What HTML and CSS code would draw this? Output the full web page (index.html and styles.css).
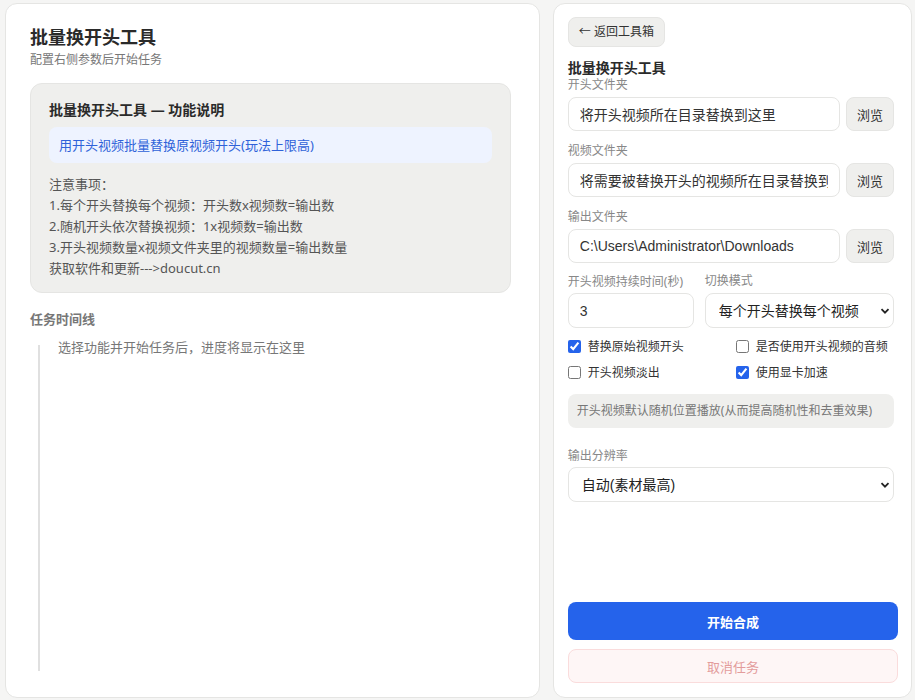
FILE: index.html
```html
<!DOCTYPE html>
<html lang="zh-CN">

<head>
    <meta charset="UTF-8">
    <meta name="viewport" content="width=device-width, initial-scale=1.0">
    <title>批量换开头工具</title>
    <link rel="stylesheet" href="styles.css">
</head>

<body>
    <div class="panel left-panel">
        <h1 class="page-title">批量换开头工具</h1>
        <div class="page-sub">配置右侧参数后开始任务</div>

        <div class="intro-card">
            <div class="intro-title">批量换开头工具 — 功能说明</div>
            <div class="intro-tip">用开头视频批量替换原视频开头(玩法上限高)</div>
            <div class="intro-notes">
                <div>注意事项：</div>
                <div>1.每个开头替换每个视频：开头数x视频数=输出数</div>
                <div>2.随机开头依次替换视频：1x视频数=输出数</div>
                <div>3.开头视频数量x视频文件夹里的视频数量=输出数量</div>
                <div>获取软件和更新---&gt;doucut.cn</div>
            </div>
        </div>

        <div class="timeline-title">任务时间线</div>
        <div class="timeline">
            <div class="timeline-empty">选择功能并开始任务后，进度将显示在这里</div>
        </div>
    </div>

    <div class="panel right-panel">
        <button class="back-btn" onclick="goBack()">← 返回工具箱</button>
        <div class="form-title">批量换开头工具</div>

        <div class="form">
            <label class="field-label">开头文件夹</label>
            <div class="path-row">
                <input class="text-input" id="introDir" value="将开头视频所在目录替换到这里">
                <button class="browse-btn">浏览</button>
            </div>

            <label class="field-label">视频文件夹</label>
            <div class="path-row">
                <input class="text-input" id="videoDir" value="将需要被替换开头的视频所在目录替换到这里">
                <button class="browse-btn">浏览</button>
            </div>

            <label class="field-label">输出文件夹</label>
            <div class="path-row">
                <input class="text-input" id="outDir" value="C:\Users\Administrator\Downloads">
                <button class="browse-btn">浏览</button>
            </div>

            <div class="two-col">
                <div class="col-duration">
                    <label class="field-label">开头视频持续时间(秒)</label>
                    <input class="text-input" type="text" value="3">
                </div>
                <div class="col-mode">
                    <label class="field-label">切换模式</label>
                    <div class="select-wrap">
                        <select class="select-input">
                            <option>每个开头替换每个视频</option>
                            <option>随机开头依次替换视频</option>
                        </select>
                        <svg class="chevron" width="10" height="10" viewBox="0 0 10 10"><path d="M1.5 3.2 L5 6.7 L8.5 3.2" fill="none" stroke="#222" stroke-width="1.8"/></svg>
                    </div>
                </div>
            </div>

            <div class="checks">
                <label class="check"><input type="checkbox" checked> 替换原始视频开头</label>
                <label class="check"><input type="checkbox"> 是否使用开头视频的音频</label>
                <label class="check"><input type="checkbox"> 开头视频淡出</label>
                <label class="check"><input type="checkbox" checked> 使用显卡加速</label>
            </div>

            <div class="hint-box">开头视频默认随机位置播放(从而提高随机性和去重效果)</div>

            <label class="field-label res-label">输出分辨率</label>
            <div class="select-wrap">
                <select class="select-input">
                    <option>自动(素材最高)</option>
                    <option>1080P</option>
                    <option>720P</option>
                </select>
                <svg class="chevron" width="10" height="10" viewBox="0 0 10 10"><path d="M1.5 3.2 L5 6.7 L8.5 3.2" fill="none" stroke="#222" stroke-width="1.8"/></svg>
            </div>
        </div>

        <div class="actions">
            <button class="start-btn">开始合成</button>
            <button class="cancel-btn" disabled>取消任务</button>
        </div>
    </div>

    <script>
        function goBack() {
            window.location.href = '#';
        }
    </script>
</body>

</html>
```

FILE: styles.css
```css
* {
    box-sizing: border-box;
}

body {
    font-family: 'Noto Sans', 'Noto Sans CJK SC', sans-serif;
    background-color: #f5f5f4;
    margin: 0;
    display: flex;
    gap: 13px;
    padding: 3px 3px 2px 5px;
    height: 700px;
    color: #333;
}

.panel {
    background-color: #ffffff;
    border: 1px solid #e5e5e3;
    border-radius: 12px;
}

.left-panel {
    width: 536px;
    padding: 20px 28px 26px 24px;
    display: flex;
    flex-direction: column;
}

.page-title {
    margin: 0;
    font-size: 18px;
    line-height: 26px;
    font-weight: bold;
    color: #2a2a2a;
}

.page-sub {
    font-size: 12px;
    line-height: 18px;
    color: #777;
    margin-top: 1px;
}

.intro-card {
    margin-top: 14px;
    background-color: #efefed;
    border: 1px solid #e5e5e3;
    border-radius: 12px;
    padding: 15px 18px 13px 18px;
}

.intro-title {
    font-size: 14px;
    line-height: 22px;
    font-weight: bold;
    color: #2a2a2a;
}

.intro-tip {
    margin-top: 6px;
    background-color: #eef3ff;
    color: #2f62d9;
    border-radius: 8px;
    font-size: 13px;
    line-height: 20px;
    padding: 8px 10px;
}

.intro-notes {
    margin-top: 11px;
    font-size: 13px;
    line-height: 21px;
    color: #555;
}

.timeline-title {
    margin-top: 16px;
    font-size: 13px;
    line-height: 20px;
    font-weight: bold;
    color: #777;
}

.timeline {
    flex: 1;
    margin: 16px 0 0 8px;
    border-left: 2px solid #e0e0e0;
    padding-left: 18px;
}

.timeline-empty {
    font-size: 13px;
    line-height: 18px;
    color: #777;
    margin-top: -7px;
}

.right-panel {
    width: 360px;
    padding: 13px 13px 14px 14px;
    display: flex;
    flex-direction: column;
}

.back-btn {
    align-self: flex-start;
    font-family: inherit;
    font-size: 12px;
    line-height: 18px;
    color: #333;
    background-color: #efefed;
    border: 1px solid #e5e5e3;
    border-radius: 8px;
    padding: 5px 10px;
    cursor: pointer;
}

.form-title {
    margin-top: 12px;
    font-size: 14px;
    line-height: 18px;
    font-weight: bold;
    color: #2a2a2a;
}

.form {
    display: flex;
    flex-direction: column;
    margin-right: 4px;
}

.field-label {
    display: block;
    font-size: 12px;
    line-height: 16px;
    color: #888;
    margin-bottom: 4px;
}

.path-row {
    display: flex;
    gap: 6px;
    margin-bottom: 12px;
}

.text-input {
    flex: 1;
    min-width: 0;
    height: 34px;
    border: 1px solid #e5e5e3;
    border-radius: 8px;
    padding: 0 11px;
    font-family: 'Liberation Sans', 'Noto Sans CJK SC', sans-serif;
    font-size: 14px;
    color: #333;
    background: #fff;
}

.browse-btn {
    width: 48px;
    height: 34px;
    border: 1px solid #e5e5e3;
    border-radius: 8px;
    background-color: #efefed;
    font-family: inherit;
    font-size: 13px;
    color: #333;
    cursor: pointer;
    padding: 0;
}

.two-col {
    display: flex;
    gap: 11px;
    margin-top: -2px;
}

.col-duration {
    width: 126px;
    display: flex;
    flex-direction: column;
}

.col-duration .field-label {
    margin-top: 1px;
    margin-bottom: 3px;
}

.col-mode {
    flex: 1;
    display: flex;
    flex-direction: column;
}

.select-wrap {
    position: relative;
}

.select-input {
    width: 100%;
    height: 35px;
    appearance: none;
    border: 1px solid #e5e5e3;
    border-radius: 8px;
    padding: 0 13px;
    font-family: 'Liberation Sans', 'Noto Sans CJK SC', sans-serif;
    font-size: 14px;
    color: #222;
    background: #fff;
}

.chevron {
    position: absolute;
    right: 4px;
    top: 13px;
    pointer-events: none;
}

.checks {
    display: grid;
    grid-template-columns: 168px 1fr;
    row-gap: 7px;
    margin-top: 9px;
}

.check {
    display: flex;
    align-items: center;
    gap: 7px;
    font-size: 12px;
    line-height: 19px;
    color: #333;
}

.check input {
    margin: 0;
    width: 13px;
    height: 13px;
    accent-color: #2563eb;
}

.hint-box {
    margin-top: 12px;
    background-color: #efefed;
    border-radius: 8px;
    font-size: 12px;
    line-height: 18px;
    color: #777;
    padding: 8px 9px;
}

.res-label {
    margin-top: 20px;
    margin-bottom: 3px;
}

.actions {
    margin-top: auto;
    display: flex;
    flex-direction: column;
    gap: 9px;
}

.start-btn {
    height: 38px;
    border: none;
    border-radius: 8px;
    background-color: #2563eb;
    color: #fff;
    font-family: inherit;
    font-size: 13px;
    font-weight: bold;
    cursor: pointer;
}

.cancel-btn {
    height: 34px;
    border: 1px solid #fadcdc;
    border-radius: 8px;
    background-color: #fef6f6;
    color: #e39c9c;
    font-family: inherit;
    font-size: 13px;
}
```
